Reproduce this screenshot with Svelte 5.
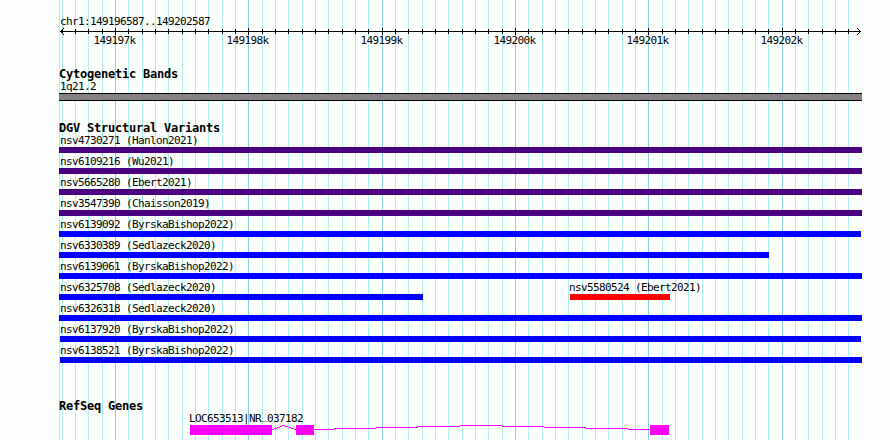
<script lang="ts">
	/**
	 * Genome browser panel
	 * Ruler on top, then one block per track, all over a shared bp grid
	 */

	const LEFT = 59;
	const RIGHT = 862;

	const gridLines = Array.from({ length: 60 }, (_, i) => ({
		x: Math.floor(62 + (40 * i) / 3),
		major: i % 10 === 4
	}));

	const rulerLabels = gridLines
		.filter((line) => line.major)
		.map((line, i) => ({ x: line.x, text: `${149197 + i}k` }));

	const variantRows = [
		[{ label: 'nsv4730271 (Hanlon2021)', start: 59, end: 862, kind: 'complex' }],
		[{ label: 'nsv6109216 (Wu2021)', start: 59, end: 862, kind: 'complex' }],
		[{ label: 'nsv5665280 (Ebert2021)', start: 59, end: 862, kind: 'complex' }],
		[{ label: 'nsv3547390 (Chaisson2019)', start: 59, end: 862, kind: 'complex' }],
		[{ label: 'nsv6139092 (ByrskaBishop2022)', start: 59, end: 861, kind: 'gain' }],
		[{ label: 'nsv6330389 (Sedlazeck2020)', start: 59, end: 769, kind: 'gain' }],
		[{ label: 'nsv6139061 (ByrskaBishop2022)', start: 59, end: 862, kind: 'gain' }],
		[
			{ label: 'nsv6325708 (Sedlazeck2020)', start: 59, end: 423, kind: 'gain' },
			{ label: 'nsv5580524 (Ebert2021)', start: 570, end: 670, kind: 'loss' }
		],
		[{ label: 'nsv6326318 (Sedlazeck2020)', start: 59, end: 862, kind: 'gain' }],
		[{ label: 'nsv6137920 (ByrskaBishop2022)', start: 60, end: 861, kind: 'gain' }],
		[{ label: 'nsv6138521 (ByrskaBishop2022)', start: 60, end: 862, kind: 'gain' }]
	];

	// Space between a glyph and the one before it in the same row
	const gapBefore = (row: { start: number; end: number }[], i: number) =>
		row[i].start - (i ? row[i - 1].end : LEFT);
</script>

<main class="browser">
	<svg class="grid" width="890" height="440" shape-rendering="crispEdges">
		<rect class="minor" x={LEFT} y="0" width="1" height="440" />
		{#each gridLines as line}
			<rect class={line.major ? 'major' : 'minor'} x={line.x} y="0" width="1" height="440" />
		{/each}
	</svg>

	<div class="panel">
		<header class="ruler">
			<div class="label region">chr1:149196587..149202587</div>
			<svg class="scale" width="830" height="21" viewBox="59 27 830 21">
				<g shape-rendering="crispEdges">
					<rect x="60" y="31" width="801" height="1" />
					{#each gridLines as line}
						<rect
							x={line.x}
							y={line.major ? 28 : 29}
							width="1"
							height={line.major ? 7 : 5}
						/>
					{/each}
				</g>
				<path d="M64 28L60.5 31.5L64 35M857 28L860.5 31.5L857 35" />
				{#each rulerLabels as tick}
					<text class="label" x={tick.x - 21.5} y="44">{tick.text}</text>
				{/each}
			</svg>
		</header>

		<section class="bands">
			<h2>Cytogenetic Bands</h2>
			<div class="label">1q21.2</div>
			<div class="band" style:width="{RIGHT - LEFT}px"></div>
		</section>

		<section class="variants">
			<h2>DGV Structural Variants</h2>
			{#each variantRows as row}
				<div class="row">
					{#each row as variant, i}
						<div
							class="variant"
							style:width="{variant.end - variant.start}px"
							style:margin-left="{gapBefore(row, i)}px"
						>
							<div
								class="label"
								class:tight={variant.start === 60}
								class:flush={variant.start > 60}
							>
								{variant.label}
							</div>
							<div class="bar {variant.kind}"></div>
						</div>
					{/each}
				</div>
			{/each}
		</section>

		<section class="genes">
			<h2>RefSeq Genes</h2>
			<div class="gene">
				<div class="label flush">LOC653513|NR<span class="underscore">_</span>037182</div>
				<svg width="480" height="10" viewBox="190 425 480 10" shape-rendering="crispEdges">
					<!-- exons -->
					<path d="M190 425h82v10h-82zM296 425h18v10h-18zM650 425h19v10h-19z" />
					<!-- introns -->
					<path
						d="M272 429h2v1h-2zM274 428h3v1h-3zM277 427h3v1h-3zM280 426h2v1h-2zM282 425h3v1h-3zM285 426h3v1h-3zM288 427h3v1h-3zM291 428h3v1h-3zM294 429h2v1h-2z"
					/>
					<path
						d="M314 429h20v1h-20zM334 428h42v1h-42zM376 427h42v1h-42zM418 426h42v1h-42zM460 425h42v1h-42zM502 426h42v1h-42zM544 427h42v1h-42zM586 428h42v1h-42zM628 429h22v1h-22z"
					/>
				</svg>
			</div>
		</section>
	</div>
</main>

<style>
	:global(body) {
		margin: 0;
		background: #fdfffc;
	}

	.browser {
		position: relative;
		width: 890px;
		height: 440px;
		overflow: hidden;
		color: #000;
	}

	.grid {
		position: absolute;
		inset: 0;
	}

	.minor {
		fill: #afeeee;
	}

	.major {
		fill: #87ceeb;
	}

	.panel {
		position: relative;
		display: flex;
		flex-direction: column;
		padding: 16px 0 0 59px;
	}

	svg {
		display: block;
	}

	h2 {
		margin: 0;
		height: 13px;
		font: bold 12px/13px 'DejaVu Sans Mono', monospace;
		letter-spacing: -0.224px;
		white-space: pre;
	}

	.label {
		height: 12px;
		padding-left: 1px;
		font: 11px/12px 'DejaVu Sans Mono', monospace;
		letter-spacing: -0.622px;
		white-space: nowrap;
	}

	.label.tight {
		padding-left: 0;
	}

	.label.flush {
		padding-left: 0;
		margin-left: -1px;
	}

	.region {
		height: 11px;
	}

	.scale path {
		fill: none;
		stroke: #000;
	}

	.bands {
		margin-top: 20px;
	}

	.band {
		box-sizing: border-box;
		height: 8px;
		border: solid #000;
		border-width: 1px 0;
		background: #848084;
	}

	.variants {
		margin-top: 21px;
	}

	.row {
		display: flex;
		height: 21px;
	}

	.bar {
		height: 6px;
	}

	.complex {
		background: #4b0082;
	}

	.gain {
		background: #0000ff;
	}

	.loss {
		background: #ff0000;
	}

	.genes {
		margin-top: 34px;
	}

	.gene {
		padding-left: 131px;
	}

	/* lifts the underscore clear of the exon below it */
	.underscore {
		vertical-align: 3px;
		line-height: 0;
	}

	.gene svg {
		fill: #ff00ff;
	}
</style>
